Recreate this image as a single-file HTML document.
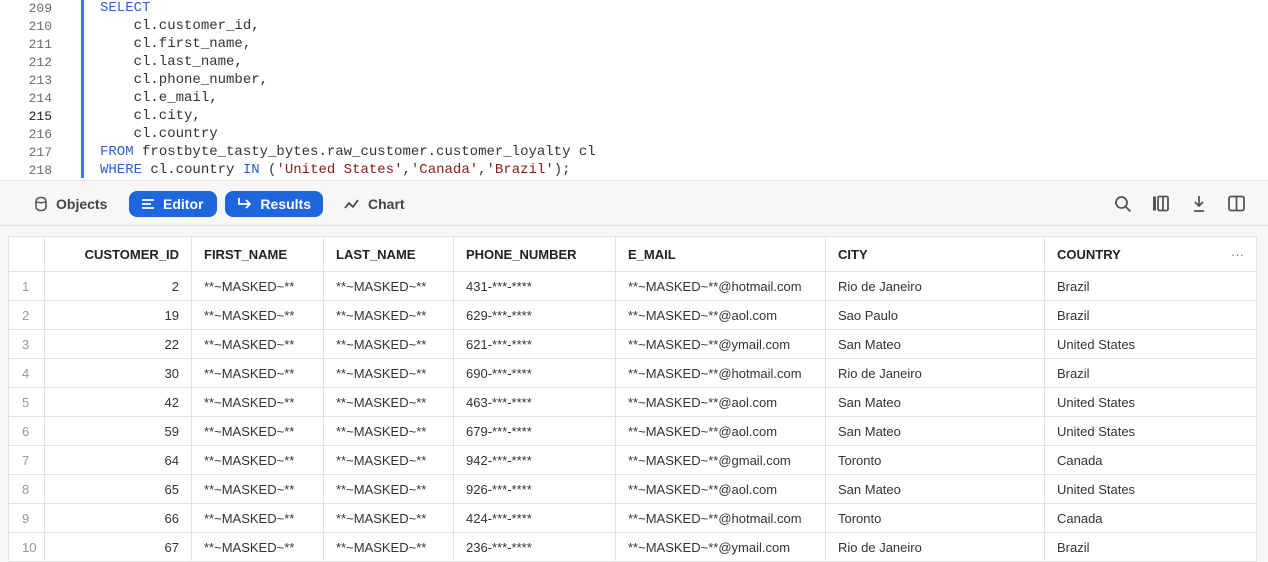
<!DOCTYPE html>
<html><head><meta charset="utf-8"><style>
*{margin:0;padding:0;box-sizing:border-box}
body{width:1268px;height:561px;overflow:hidden;background:#f7f7f8;font-family:"Liberation Sans",sans-serif;position:relative}
#code{position:absolute;left:0;top:0;width:1268px;height:180px;background:#fff}
.ln{position:absolute;left:0;width:52px;text-align:right;font:13px "Liberation Mono",monospace;color:#6b6b6b}
.cl{position:absolute;left:100px;font:14px "Liberation Mono",monospace;color:#333;white-space:pre}
.k{color:#2863d6}.s{color:#8b1a1a}
#bar{position:absolute;left:81px;top:0;width:3px;height:178px;background:#3b74ec}
#tb{position:absolute;left:0;top:180px;width:1268px;height:46px;background:#f7f7f8;border-top:1px solid #e4e4e4;border-bottom:1px solid #e4e4e4}
.btn{position:absolute;top:10px;height:26px;border-radius:8px;font-size:14px;font-weight:bold;line-height:26px;color:#444;display:flex;align-items:center;gap:8px;padding:0 12px}
.on{background:#1d66db;color:#fff}
table{position:absolute;left:8px;top:236px;width:1248px;border-collapse:collapse;background:#fff;font-size:13px;color:#333;table-layout:fixed}
td,th{border:1px solid #e2e2e2;height:29px;padding:0 12px;white-space:nowrap;overflow:hidden}
th{height:35px;font-weight:bold;text-align:left;color:#222}
td.n{color:#999;padding:0 0 0 13px}
th.n{padding:0}
.r{text-align:right}
</style></head><body>
<div id="code">
<div id="bar"></div>
<div class="ln" style="top:1px">209</div><div class="cl" style="top:0"><span class="k">SELECT</span></div>
<div class="ln" style="top:19px">210</div><div class="cl" style="top:18px">    cl.customer_id,</div>
<div class="ln" style="top:37px">211</div><div class="cl" style="top:36px">    cl.first_name,</div>
<div class="ln" style="top:55px">212</div><div class="cl" style="top:54px">    cl.last_name,</div>
<div class="ln" style="top:73px">213</div><div class="cl" style="top:72px">    cl.phone_number,</div>
<div class="ln" style="top:91px">214</div><div class="cl" style="top:90px">    cl.e_mail,</div>
<div class="ln" style="top:109px;color:#222">215</div><div class="cl" style="top:108px">    cl.city,</div>
<div class="ln" style="top:127px">216</div><div class="cl" style="top:126px">    cl.country</div>
<div class="ln" style="top:145px">217</div><div class="cl" style="top:144px"><span class="k">FROM</span> frostbyte_tasty_bytes.raw_customer.customer_loyalty cl</div>
<div class="ln" style="top:163px">218</div><div class="cl" style="top:162px"><span class="k">WHERE</span> cl.country <span class="k">IN</span> (<span class="s">'United States'</span>,<span class="s">'Canada'</span>,<span class="s">'Brazil'</span>);</div>
</div>
<div id="tb">
<div class="btn" style="left:22px"><svg width="14" height="16" viewBox="0 0 14 16"><rect x="2" y="1.5" width="10" height="13" rx="4" fill="none" stroke="#555" stroke-width="1.6"/><path d="M2 5.5q5 2.5 10 0" fill="none" stroke="#555" stroke-width="1.4"/></svg>Objects</div>
<div class="btn on" style="left:129px;width:88px"><svg width="14" height="12"><path d="M1 2h12M1 6h9M1 10h12" stroke="#fff" stroke-width="1.8"/></svg>Editor</div>
<div class="btn on" style="left:225px;width:98px"><svg width="16" height="14"><path d="M2 1v6h11M9 3l4 4-4 4" fill="none" stroke="#fff" stroke-width="1.8"/></svg>Results</div>
<div class="btn" style="left:332px"><svg width="16" height="12"><path d="M1 10l4-5 4 4 5-7" fill="none" stroke="#444" stroke-width="1.7"/></svg>Chart</div>
<svg style="position:absolute;left:1114px;top:14px" width="18" height="18"><circle cx="7.5" cy="7.5" r="5.5" fill="none" stroke="#555" stroke-width="1.8"/><path d="M11.5 11.5l5 5" stroke="#555" stroke-width="1.8"/></svg>
<svg style="position:absolute;left:1152px;top:14px" width="18" height="18"><rect x="1" y="1.5" width="3" height="14" fill="#555"/><rect x="6" y="1.5" width="10" height="14" rx="1.5" fill="none" stroke="#555" stroke-width="1.8"/><path d="M11 1.5v14" stroke="#555" stroke-width="1.8"/></svg>
<svg style="position:absolute;left:1190px;top:14px" width="18" height="18"><path d="M9 1v10M5 7l4 4 4-4M4 16h10" fill="none" stroke="#555" stroke-width="1.8"/></svg>
<svg style="position:absolute;left:1228px;top:14px" width="18" height="18"><rect x="1" y="1.5" width="15" height="14" rx="2" fill="none" stroke="#555" stroke-width="1.8"/><path d="M8.5 1.5v14" stroke="#555" stroke-width="1.8"/></svg>
</div>
<table>
<colgroup><col style="width:36px"><col style="width:147px"><col style="width:132px"><col style="width:130px"><col style="width:162px"><col style="width:210px"><col style="width:219px"><col style="width:212px"></colgroup>
<tr><th class="n"></th><th class="r">CUSTOMER_ID</th><th>FIRST_NAME</th><th>LAST_NAME</th><th>PHONE_NUMBER</th><th>E_MAIL</th><th>CITY</th><th>COUNTRY<span style="float:right;color:#777;font-weight:normal">···</span></th></tr>
<tr><td class="n">1</td><td class="r">2</td><td>**~MASKED~**</td><td>**~MASKED~**</td><td>431-***-****</td><td>**~MASKED~**@hotmail.com</td><td>Rio de Janeiro</td><td>Brazil</td></tr>
<tr><td class="n">2</td><td class="r">19</td><td>**~MASKED~**</td><td>**~MASKED~**</td><td>629-***-****</td><td>**~MASKED~**@aol.com</td><td>Sao Paulo</td><td>Brazil</td></tr>
<tr><td class="n">3</td><td class="r">22</td><td>**~MASKED~**</td><td>**~MASKED~**</td><td>621-***-****</td><td>**~MASKED~**@ymail.com</td><td>San Mateo</td><td>United States</td></tr>
<tr><td class="n">4</td><td class="r">30</td><td>**~MASKED~**</td><td>**~MASKED~**</td><td>690-***-****</td><td>**~MASKED~**@hotmail.com</td><td>Rio de Janeiro</td><td>Brazil</td></tr>
<tr><td class="n">5</td><td class="r">42</td><td>**~MASKED~**</td><td>**~MASKED~**</td><td>463-***-****</td><td>**~MASKED~**@aol.com</td><td>San Mateo</td><td>United States</td></tr>
<tr><td class="n">6</td><td class="r">59</td><td>**~MASKED~**</td><td>**~MASKED~**</td><td>679-***-****</td><td>**~MASKED~**@aol.com</td><td>San Mateo</td><td>United States</td></tr>
<tr><td class="n">7</td><td class="r">64</td><td>**~MASKED~**</td><td>**~MASKED~**</td><td>942-***-****</td><td>**~MASKED~**@gmail.com</td><td>Toronto</td><td>Canada</td></tr>
<tr><td class="n">8</td><td class="r">65</td><td>**~MASKED~**</td><td>**~MASKED~**</td><td>926-***-****</td><td>**~MASKED~**@aol.com</td><td>San Mateo</td><td>United States</td></tr>
<tr><td class="n">9</td><td class="r">66</td><td>**~MASKED~**</td><td>**~MASKED~**</td><td>424-***-****</td><td>**~MASKED~**@hotmail.com</td><td>Toronto</td><td>Canada</td></tr>
<tr><td class="n">10</td><td class="r">67</td><td>**~MASKED~**</td><td>**~MASKED~**</td><td>236-***-****</td><td>**~MASKED~**@ymail.com</td><td>Rio de Janeiro</td><td>Brazil</td></tr>
</table>
</body></html>
